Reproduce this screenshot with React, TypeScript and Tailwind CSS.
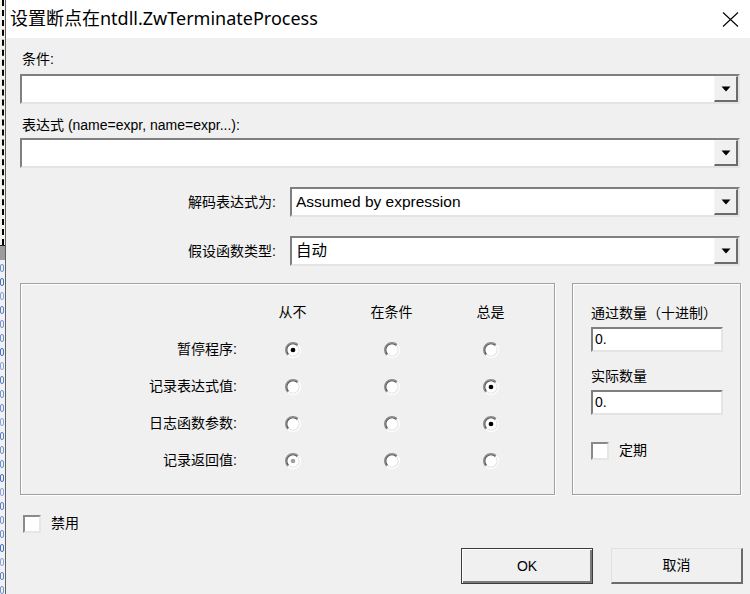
import React from 'react';

const ui = "font-['Liberation_Sans','Noto_Sans_CJK_SC',sans-serif] text-[14px] text-black";

// Classic sunken radio button
const Radio = ({ checked, disabled }: { checked?: boolean; disabled?: boolean }) => (
  <svg width="18" height="18" viewBox="0 0 16 16" aria-hidden="true">
    <circle cx="8" cy="8" r="6.5" fill="#ffffff" />
    <path d="M3.4 12.6 A6.5 6.5 0 0 1 12.6 3.4" fill="none" stroke="#8a8a8a" strokeWidth="1.2" />
    <path d="M12.6 3.4 A6.5 6.5 0 0 1 3.4 12.6" fill="none" stroke="#ffffff" strokeWidth="1.2" />
    <path d="M4.1 11.9 A5.5 5.5 0 0 1 11.9 4.1" fill="none" stroke="#505050" strokeWidth="1" />
    <path d="M11.9 4.1 A5.5 5.5 0 0 1 4.1 11.9" fill="none" stroke="#e3e3e3" strokeWidth="1" />
    {checked && <circle cx="8" cy="8" r="2.1" fill={disabled ? '#a0a0a0' : '#000000'} />}
  </svg>
);

const Checkbox = () => (
  <div className="w-[18px] h-[18px] bg-white border-2 border-t-[#8a8a8a] border-l-[#8a8a8a] border-r-[#e6e6e6] border-b-[#e6e6e6]" />
);

const Combo = ({ value, className = '' }: { value?: string; className?: string }) => (
  <div
    className={`h-[30px] flex bg-white border-2 border-t-[#7f7f7f] border-l-[#7f7f7f] border-r-[#e4e4e4] border-b-[#e4e4e4] ${className}`}
  >
    <div className="flex-1 flex items-center pl-[4px] text-[15.5px] font-['Liberation_Sans','Noto_Sans_CJK_SC',sans-serif]">
      {value}
    </div>
    <div className="w-[24px] flex items-center justify-center bg-[#f0f0f0] border-t border-l border-t-[#f5f5f5] border-l-[#f5f5f5] border-r-2 border-b-2 border-r-[#6b6b6b] border-b-[#6b6b6b]">
      <svg width="10" height="6" viewBox="0 0 10 6" aria-hidden="true">
        <path d="M0.5 0.5 H9.5 L5 5.5 Z" fill="#000" />
      </svg>
    </div>
  </div>
);

const TextBox = ({ value }: { value: string }) => (
  <div className="w-[132px] h-[25px] flex items-center pl-[2px] bg-white border-2 border-t-[#7f7f7f] border-l-[#7f7f7f] border-r-[#e4e4e4] border-b-[#e4e4e4] text-[14px]">
    {value}
  </div>
);

const rows: { label: string; sel: number; disabled?: boolean }[] = [
  { label: '暂停程序:', sel: 0 },
  { label: '记录表达式值:', sel: 2 },
  { label: '日志函数参数:', sel: 2 },
  { label: '记录返回值:', sel: 0, disabled: true },
];

export default function App() {
  return (
    <div className={`w-[750px] h-[594px] flex overflow-hidden bg-[#f0f0f0] ${ui}`}>
      {/* sliver of the window behind */}
      <div className="w-[5px] flex flex-col bg-[#f3f1ec]">
        <div className="h-[288px] ml-[2px] border-l-2 border-dashed border-black" />
        <div className="h-[2px] bg-[#222]" />
        <div className="h-[16px] bg-[#9c9c9c]" />
        <div className="flex-1 flex flex-col gap-[6px] pt-[4px] bg-[#eef1f6]">
          {['#6d8fc9', '#4a6fb5', '#8aa4d6', '#5f7fbf', '#7a95cc', '#6d8fc9', '#4a6fb5', '#8aa4d6', '#5f7fbf', '#7a95cc', '#6d8fc9', '#8aa4d6', '#5f7fbf', '#7a95cc', '#6d8fc9', '#4a6fb5', '#8aa4d6', '#5f7fbf', '#7a95cc', '#6d8fc9', '#4a6fb5', '#8aa4d6', '#5f7fbf', '#7a95cc'].map((c, i) => (
            <div key={i} className="h-[8px] w-[4px] rounded-sm border" style={{ borderColor: c }} />
          ))}
        </div>
      </div>

      <div className="flex-1 flex flex-col border-l border-[#5f5f5f]">
        {/* Title bar */}
        <div className="h-[38px] bg-white flex items-center justify-between pl-[4px] pr-[11px]">
          <span className="text-[18px] font-['Noto_Sans','Noto_Sans_CJK_SC',sans-serif] pb-[2px]">
            设置断点在ntdll.ZwTerminateProcess
          </span>
          <svg width="17" height="15" viewBox="0 0 17 15" aria-hidden="true">
            <path d="M1 0.5 L16 14.5 M16 0.5 L1 14.5" stroke="#000" strokeWidth="1.1" />
          </svg>
        </div>

        {/* Body */}
        <div className="flex-1 flex flex-col pl-[14px] pr-[7px]">
          <div className="mt-[12px] leading-[18px] pl-[2px]">条件:</div>
          <Combo className="mt-[6px] mr-[3px]" />
          <div className="mt-[12px] leading-[18px] pl-[2px]">表达式 (name=expr, name=expr...):</div>
          <Combo className="mt-[4px] mr-[3px]" />

          <div className="mt-[19px] flex items-center mr-[3px]">
            <div className="w-[270px] pr-[14px] text-right">解码表达式为:</div>
            <Combo className="flex-1" value="Assumed by expression" />
          </div>
          <div className="mt-[19px] flex items-center mr-[3px]">
            <div className="w-[270px] pr-[14px] text-right">假设函数类型:</div>
            <Combo className="flex-1" value="自动" />
          </div>

          {/* Groups */}
          <div className="mt-[17px] flex gap-[17px] mr-[2px]">
            <div className="w-[535px] h-[212px] border border-[#a0a0a0] shadow-[inset_1px_1px_0_#ffffff,1px_1px_0_#ffffff] pt-[10px]">
              <div className="grid grid-cols-[222px_99px_99px_99px] auto-rows-[37px] items-center">
                <div />
                <div className="text-center">从不</div>
                <div className="text-center">在条件</div>
                <div className="text-center">总是</div>
                {rows.map((r) => (
                  <React.Fragment key={r.label}>
                    <div className="text-right pr-[6px]">{r.label}</div>
                    {[0, 1, 2].map((c) => (
                      <div key={c} className="flex justify-center">
                        <Radio checked={r.sel === c} disabled={r.disabled} />
                      </div>
                    ))}
                  </React.Fragment>
                ))}
              </div>
            </div>

            <div className="w-[169px] h-[212px] border border-[#a0a0a0] shadow-[inset_1px_1px_0_#ffffff,1px_1px_0_#ffffff] pl-[18px] pt-[20px] flex flex-col">
              <div className="leading-[18px]">通过数量（十进制）</div>
              <div className="mt-[5px]">
                <TextBox value="0." />
              </div>
              <div className="mt-[15px] leading-[18px]">实际数量</div>
              <div className="mt-[5px]">
                <TextBox value="0." />
              </div>
              <div className="mt-[25px] flex items-center gap-[10px]">
                <Checkbox />
                <span>定期</span>
              </div>
            </div>
          </div>

          <div className="mt-[18px] ml-[3px] flex items-center gap-[10px]">
            <Checkbox />
            <span>禁用</span>
          </div>

          <div className="mt-[14px] flex justify-end gap-[18px]">
            <button className="w-[132px] h-[36px] bg-[#f0f0f0] border border-[#3c3c3c] shadow-[inset_1px_1px_0_#ffffff,inset_-2px_-2px_0_#7a7a7a] text-[14px]">
              OK
            </button>
            <button className="w-[132px] h-[36px] bg-[#f0f0f0] border-t border-l border-t-[#e0e0e0] border-l-[#e0e0e0] border-r-2 border-b-2 border-r-[#6b6b6b] border-b-[#6b6b6b] text-[14px]">
              取消
            </button>
          </div>
        </div>
      </div>
    </div>
  );
}
